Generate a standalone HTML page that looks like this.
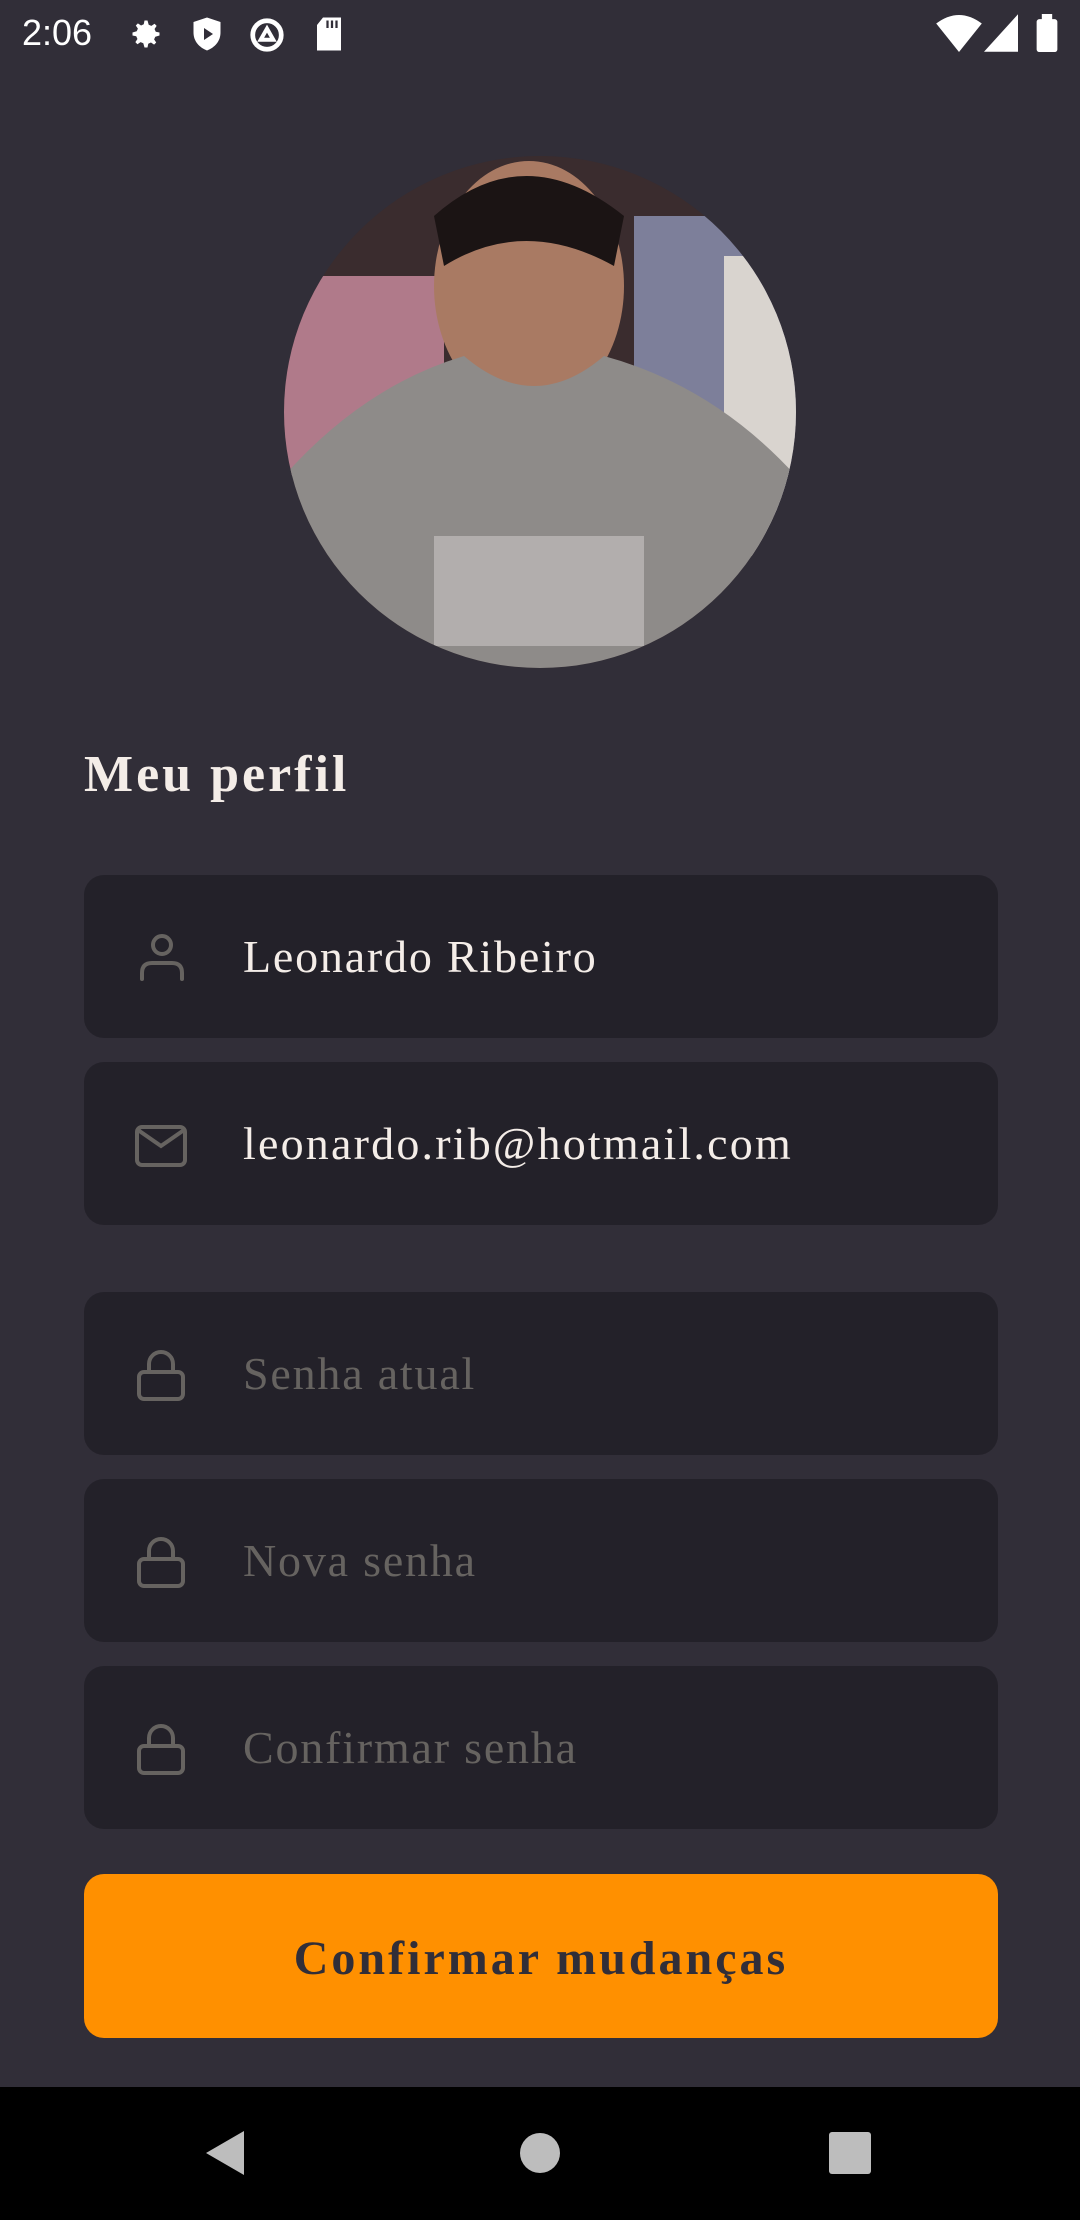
<!DOCTYPE html>
<html><head><meta charset="utf-8"><style>
*{margin:0;padding:0;box-sizing:border-box}
body{width:1080px;height:2220px;background:#312e38;position:relative;overflow:hidden;font-family:"Liberation Serif",serif}
.sb{position:absolute;top:0;left:0;width:1080px;height:68px;color:#fff;font-family:"Liberation Sans",sans-serif}
.inp{position:absolute;left:84px;width:914px;height:163px;background:#232129;border-radius:20px}
.inp svg{position:absolute;left:136px;top:58px}
.inp span{position:absolute;left:159px;top:0;line-height:163px;font-size:46px;color:#f4ede8;letter-spacing:1.8px}
.inp span.ph{color:#666360}
.btn{position:absolute;left:84px;top:1874px;width:914px;height:164px;background:#ff9000;border-radius:20px;text-align:center;line-height:170px;font-size:48px;font-weight:bold;color:#312e38;letter-spacing:3px}
.nav{position:absolute;left:0;top:2087px;width:1080px;height:133px;background:#000}
</style></head><body>
<div class="sb">
<div style="position:absolute;left:22px;top:12px;font-size:36px">2:06</div>
<svg style="position:absolute;left:128px;top:16px" width="36" height="36" viewBox="0 0 24 24"><path fill="#fff" d="M12 8a4 4 0 100 8 4 4 0 000-8zm9 5v-2l-2.5-.5-.8-1.8 1.4-2.1-1.4-1.4-2.1 1.4-1.8-.8L13 3h-2l-.5 2.5-1.8.8-2.1-1.4-1.4 1.4 1.4 2.1-.8 1.8L3 11v2l2.5.5.8 1.8-1.4 2.1 1.4 1.4 2.1-1.4 1.8.8L11 21h2l.5-2.5 1.8-.8 2.1 1.4 1.4-1.4-1.4-2.1.8-1.8z"/></svg>
<svg style="position:absolute;left:190px;top:16px" width="34" height="36" viewBox="0 0 20 24"><path fill="#fff" d="M10 1L1 4v7c0 6 4 10 9 12 5-2 9-6 9-12V4z"/><path fill="#312e38" d="M8 8v8l6-4z"/></svg>
<svg style="position:absolute;left:248px;top:16px" width="38" height="38" viewBox="0 0 24 24"><circle cx="12" cy="12" r="9" fill="none" stroke="#fff" stroke-width="3"/><path d="M8 15l4-7 4 7z" fill="none" stroke="#fff" stroke-width="2.5"/></svg>
<svg style="position:absolute;left:314px;top:16px" width="30" height="36" viewBox="0 0 20 24"><path fill="#fff" d="M6 1h12v22H2V6z"/><path stroke="#312e38" stroke-width="1.5" d="M9 3v5M12 3v5M15 3v5"/></svg>
<svg style="position:absolute;left:936px;top:14px" width="46" height="38" viewBox="0 0 24 20"><path fill="#fff" d="M0 5Q12-4 24 5L12 20z"/></svg>
<svg style="position:absolute;left:984px;top:14px" width="34" height="38" viewBox="0 0 20 22"><path fill="#fff" d="M20 0v22H0z"/></svg>
<svg style="position:absolute;left:1036px;top:14px" width="22" height="38" viewBox="0 0 12 22"><rect x="0" y="3" width="12" height="19" rx="1.5" fill="#fff"/><rect x="3" y="0" width="6" height="4" fill="#fff"/></svg>
</div>
<svg style="position:absolute;left:284px;top:156px" width="512" height="512" viewBox="0 0 512 512">
<defs><clipPath id="c"><circle cx="256" cy="256" r="256"/></clipPath></defs>
<g clip-path="url(#c)">
<rect width="512" height="512" fill="#3a2c2e"/>
<rect x="0" y="120" width="160" height="200" fill="#b07a8a"/>
<rect x="350" y="60" width="162" height="300" fill="#7d7f9a"/>
<rect x="440" y="100" width="72" height="300" fill="#d9d4cf"/>
<ellipse cx="245" cy="130" rx="95" ry="125" fill="#a97a63"/>
<path d="M150 60Q240-20 340 60L330 110Q240 60 160 110z" fill="#1b1414"/>
<path d="M0 512V320Q80 230 180 200Q250 260 320 200Q430 230 512 320V512z" fill="#8e8b89"/>
<rect x="150" y="380" width="210" height="110" fill="#c9c6c4" opacity=".6"/>
</g></svg>
<div style="position:absolute;left:84px;top:745px;font-size:52px;font-weight:bold;color:#f4ede8;letter-spacing:3px">Meu perfil</div>
<div class="inp" style="top:875px"><svg style="left:56px;top:58px" width="44" height="48" viewBox="0 0 44 48"><circle cx="22" cy="12" r="9" fill="none" stroke="#666360" stroke-width="4"/><path d="M2 46v-6q0-10 10-10h20q10 0 10 10v6" fill="none" stroke="#666360" stroke-width="4" stroke-linecap="round"/></svg><span>Leonardo Ribeiro</span></div>
<div class="inp" style="top:1062px"><svg style="left:50px;top:62px" width="54" height="44" viewBox="0 0 54 44"><rect x="3" y="3" width="48" height="38" rx="5" fill="none" stroke="#666360" stroke-width="4"/><path d="M4 6l23 16 23-16" fill="none" stroke="#666360" stroke-width="4"/></svg><span style="letter-spacing:2.2px">leonardo.rib@hotmail.com</span></div>
<div class="inp" style="top:1292px"><svg style="left:52px;top:56px" width="50" height="54" viewBox="0 0 50 54"><rect x="3" y="24" width="44" height="27" rx="5" fill="none" stroke="#666360" stroke-width="4"/><path d="M13 24v-8a12 12 0 0124 0v8" fill="none" stroke="#666360" stroke-width="4"/></svg><span class="ph">Senha atual</span></div>
<div class="inp" style="top:1479px"><svg style="left:52px;top:56px" width="50" height="54" viewBox="0 0 50 54"><rect x="3" y="24" width="44" height="27" rx="5" fill="none" stroke="#666360" stroke-width="4"/><path d="M13 24v-8a12 12 0 0124 0v8" fill="none" stroke="#666360" stroke-width="4"/></svg><span class="ph">Nova senha</span></div>
<div class="inp" style="top:1666px"><svg style="left:52px;top:56px" width="50" height="54" viewBox="0 0 50 54"><rect x="3" y="24" width="44" height="27" rx="5" fill="none" stroke="#666360" stroke-width="4"/><path d="M13 24v-8a12 12 0 0124 0v8" fill="none" stroke="#666360" stroke-width="4"/></svg><span class="ph">Confirmar senha</span></div>
<div class="btn">Confirmar mudanças</div>
<div class="nav">
<svg style="position:absolute;left:204px;top:42px" width="42" height="48" viewBox="0 0 42 48"><path d="M40 2v44L2 24z" fill="#bdbdbd"/></svg>
<svg style="position:absolute;left:519px;top:45px" width="42" height="42"><circle cx="21" cy="21" r="20" fill="#bdbdbd"/></svg>
<svg style="position:absolute;left:829px;top:45px" width="42" height="42"><rect width="42" height="42" rx="3" fill="#bdbdbd"/></svg>
</div>
</body></html>
